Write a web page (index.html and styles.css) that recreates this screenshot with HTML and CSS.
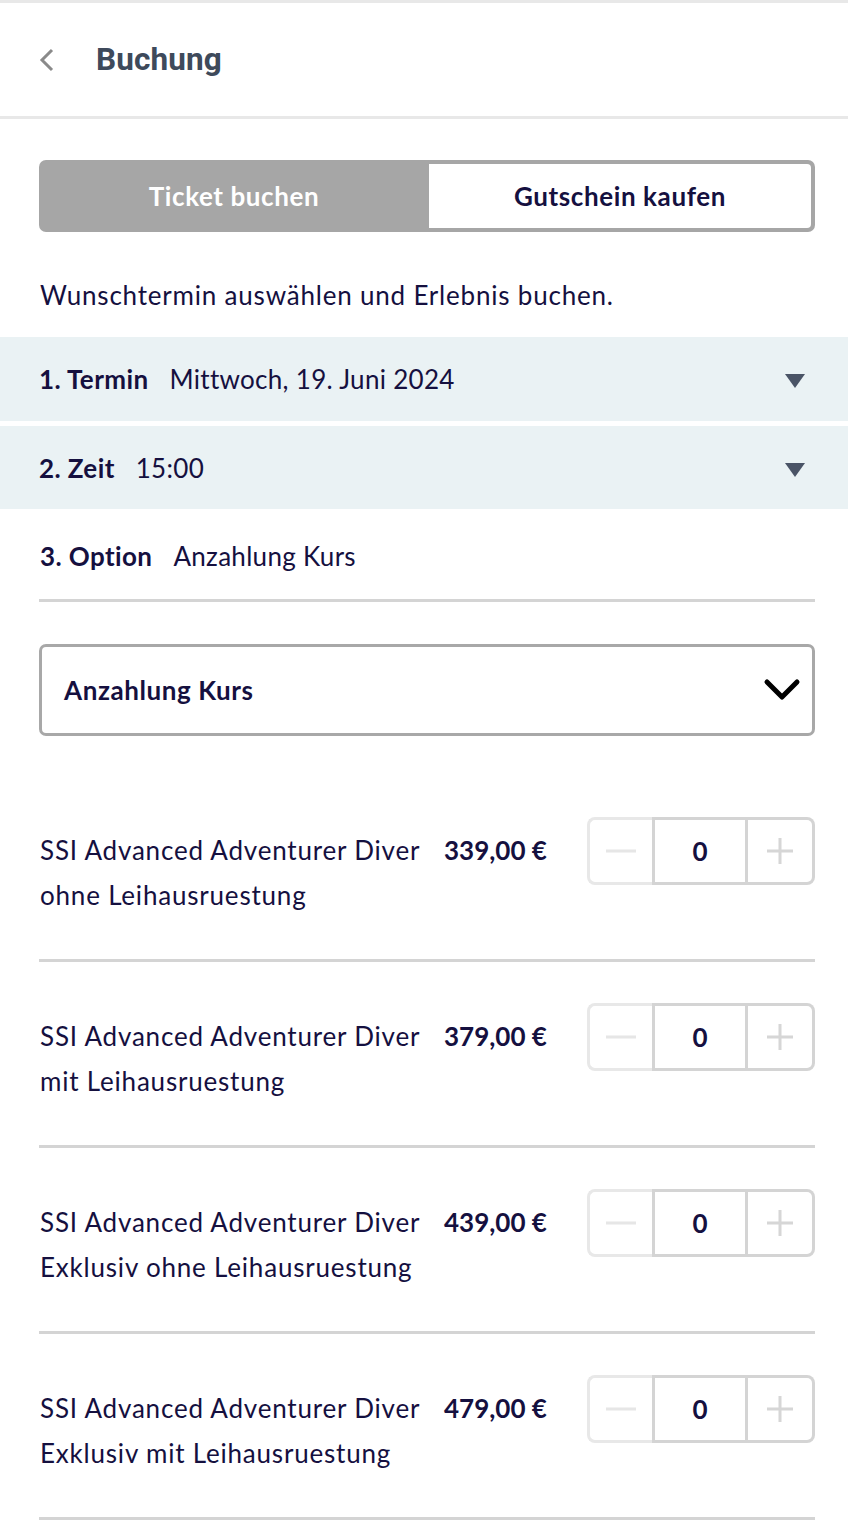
FILE: index.html
```html
<!DOCTYPE html>
<html lang="de">
<head>
<meta charset="utf-8">
<title>Buchung</title>
<link rel="stylesheet" href="styles.css">
</head>
<body>
<header class="topbar">
  <svg class="back" width="20" height="28" viewBox="0 0 20 28"><path d="M15 4 L5 14 L15 24" fill="none" stroke="#8a8a8a" stroke-width="3"/></svg>
  <h1 class="title">Buchung</h1>
</header>
<main>
  <div class="wrap">
    <div class="tabs">
      <div class="tab tab-active">Ticket buchen</div>
      <div class="tab tab-inactive">Gutschein kaufen</div>
    </div>
    <p class="intro">Wunschtermin auswählen und Erlebnis buchen.</p>
  </div>
  <div class="step step-open">
    <span class="step-label">1. Termin</span><span class="step-value">Mittwoch, 19. Juni 2024</span>
    <svg class="tri" width="22" height="16" viewBox="0 0 22 16"><path d="M1 1 H21 L11 15 Z" fill="#4a5466"/></svg>
  </div>
  <div class="step step-open">
    <span class="step-label">2. Zeit</span><span class="step-value">15:00</span>
    <svg class="tri" width="22" height="16" viewBox="0 0 22 16"><path d="M1 1 H21 L11 15 Z" fill="#4a5466"/></svg>
  </div>
  <div class="wrap">
    <div class="step step-plain">
      <span class="step-label">3. Option</span><span class="step-value">Anzahlung Kurs</span>
    </div>
    <div class="select">
      <span>Anzahlung Kurs</span>
      <svg width="38" height="26" viewBox="0 0 38 26"><path d="M4 5 L19 20 L34 5" fill="none" stroke="#000" stroke-width="5" stroke-linecap="round" stroke-linejoin="round"/></svg>
    </div>
    <div class="products">
      <div class="product">
        <div class="p-name">SSI Advanced Adventurer Diver ohne Leihausruestung</div>
        <div class="p-price">339,00 €</div>
        <div class="stepper"><span class="st-btn st-minus"><svg width="30" height="4" viewBox="0 0 30 4"><rect width="30" height="3" y="0.5" fill="#e6e6e6"/></svg></span><span class="st-val">0</span><span class="st-btn st-plus"><svg width="26" height="26" viewBox="0 0 26 26"><rect x="0" y="11.5" width="26" height="3" fill="#d6d6d6"/><rect x="11.5" y="0" width="3" height="26" fill="#d6d6d6"/></svg></span></div>
      </div>
      <div class="product">
        <div class="p-name">SSI Advanced Adventurer Diver mit Leihausruestung</div>
        <div class="p-price">379,00 €</div>
        <div class="stepper"><span class="st-btn st-minus"><svg width="30" height="4" viewBox="0 0 30 4"><rect width="30" height="3" y="0.5" fill="#e6e6e6"/></svg></span><span class="st-val">0</span><span class="st-btn st-plus"><svg width="26" height="26" viewBox="0 0 26 26"><rect x="0" y="11.5" width="26" height="3" fill="#d6d6d6"/><rect x="11.5" y="0" width="3" height="26" fill="#d6d6d6"/></svg></span></div>
      </div>
      <div class="product">
        <div class="p-name">SSI Advanced Adventurer Diver Exklusiv ohne Leihausruestung</div>
        <div class="p-price">439,00 €</div>
        <div class="stepper"><span class="st-btn st-minus"><svg width="30" height="4" viewBox="0 0 30 4"><rect width="30" height="3" y="0.5" fill="#e6e6e6"/></svg></span><span class="st-val">0</span><span class="st-btn st-plus"><svg width="26" height="26" viewBox="0 0 26 26"><rect x="0" y="11.5" width="26" height="3" fill="#d6d6d6"/><rect x="11.5" y="0" width="3" height="26" fill="#d6d6d6"/></svg></span></div>
      </div>
      <div class="product">
        <div class="p-name">SSI Advanced Adventurer Diver Exklusiv mit Leihausruestung</div>
        <div class="p-price">479,00 €</div>
        <div class="stepper"><span class="st-btn st-minus"><svg width="30" height="4" viewBox="0 0 30 4"><rect width="30" height="3" y="0.5" fill="#e6e6e6"/></svg></span><span class="st-val">0</span><span class="st-btn st-plus"><svg width="26" height="26" viewBox="0 0 26 26"><rect x="0" y="11.5" width="26" height="3" fill="#d6d6d6"/><rect x="11.5" y="0" width="3" height="26" fill="#d6d6d6"/></svg></span></div>
      </div>
    </div>
  </div>
</main>
</body>
</html>
```
FILE: styles.css
```css
* { box-sizing: border-box; }
html, body { margin: 0; padding: 0; background: #fff; }
body {
  font-family: Lato, "Noto Sans", sans-serif;
  color: #15103f;
  font-size: 26px;
  letter-spacing: 0.8px;
}
.topbar {
  border-top: 3px solid #e8e8e8;
  border-bottom: 3px solid #e8e8e8;
  height: 119px;
  display: flex;
  align-items: center;
  padding-left: 37px;
}
.back { display: block; margin-right: 39px; margin-top: 1px; }
.title {
  margin: 0;
  font-family: Roboto, "Liberation Sans", sans-serif;
  font-weight: 700;
  font-size: 31.5px;
  color: #3e4a5b;
  letter-spacing: 0.1px;
}
.wrap { padding: 0 33px 0 39px; }
.tabs {
  margin-top: 41px;
  height: 72px;
  background: #a6a6a6;
  border-radius: 7px;
  padding: 4px;
  display: flex;
}
.tab {
  flex: 1;
  display: flex;
  align-items: center;
  justify-content: center;
  font-weight: 700;
  font-size: 26px;
  letter-spacing: 0.6px;
}
.tab-active { color: #fff; padding-right: 4px; }
.tab-inactive { background: #fff; color: #15103f; border-radius: 0 4px 4px 0; }
.intro {
  margin: 45px 0 0;
  line-height: 36px;
  height: 60px;
  padding-left: 1px;
}
.step {
  display: flex;
  align-items: center;
  font-size: 26px;
}
.step-open {
  background: #eaf2f4;
  height: 84px;
  padding: 0 42px 0 39px;
  margin-bottom: 5px;
}
.step-open + .step-open { height: 83px; margin-bottom: 0; }
.step-label { font-weight: 700; margin-right: 21px; letter-spacing: 0.4px; }
.step-value { flex: 1; letter-spacing: 0.3px; }
.tri { display: block; margin-top: 4px; }
.step-plain {
  height: 93px;
  border-bottom: 3px solid #d4d4d4;
  padding-left: 1px;
  padding-top: 4px;
}
.select {
  margin-top: 42px;
  height: 92px;
  border: 3px solid #a8a8a8;
  border-radius: 7px;
  display: flex;
  align-items: center;
  justify-content: space-between;
  padding: 0 11px 0 22px;
  font-weight: 700;
  font-size: 26px;
  letter-spacing: 0.6px;
}
.select svg { display: block; }
.products { margin-top: 40px; }
.product {
  display: grid;
  grid-template-columns: 405px 143px 1fr;
  align-items: start;
  padding: 52px 0 41px;
  border-bottom: 3px solid #d4d4d4;
}
.p-name { line-height: 45px; padding-left: 1px; padding-right: 10px; }
.p-price { font-weight: 700; line-height: 45px; letter-spacing: 0; }
.stepper {
  display: flex;
  height: 68px;
  margin-top: -11px;
}
.st-btn, .st-val {
  display: flex;
  align-items: center;
  justify-content: center;
  border: 3px solid #d4d4d4;
}
.st-btn svg { display: block; }
.st-minus {
  width: 65px;
  border-color: #e8e8e8;
  border-right: 0;
  border-radius: 8px 0 0 8px;
}
.st-val {
  width: 96px;
  font-weight: 700;
  font-size: 26px;
  letter-spacing: 0;
}
.st-plus {
  flex: 1;
  border-left: 0;
  border-radius: 0 8px 8px 0;
}
```
